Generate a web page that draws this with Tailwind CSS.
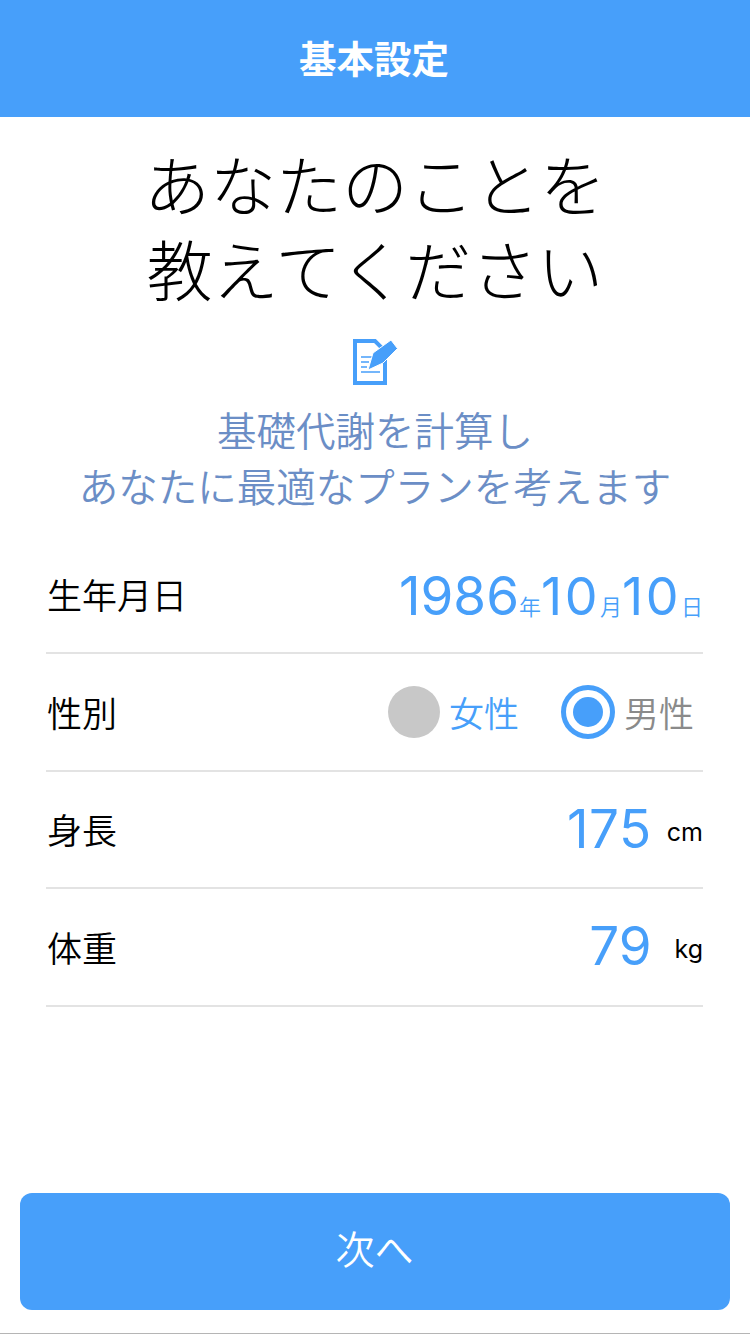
<!DOCTYPE html>
<html lang="ja">
<head>
<meta charset="utf-8">
<script src="https://cdn.jsdelivr.net/npm/@tailwindcss/browser@4"></script>
</head>
<body class="bg-white">
<div class="w-[750px] h-[1334px] flex flex-col overflow-hidden font-['Noto_Sans_CJK_JP','Noto_Sans',sans-serif]">
  <header class="h-[117px] shrink-0 bg-[#479ffa] flex items-center justify-center pb-[3px] pr-[2px]">
    <h1 class="text-[37.5px] leading-[40px] font-bold text-white">基本設定</h1>
  </header>
  <div class="mt-[23px] text-center text-[66px] leading-[85px] font-light text-black">
    <p>あなたのことを</p>
    <p>教えてください</p>
  </div>
  <div class="mt-[29px] flex justify-center">
    <svg class="ml-[1px]" width="45" height="46" viewBox="0 0 45 46" fill="none">
      <path d="M2 2H22L32 12V44H2Z" stroke="#479ffa" stroke-width="4"/>
      <path d="M8 18H22M8 23H16M8 28H14M8 33H27" stroke="#479ffa" stroke-width="1.5"/>
      <path d="M38 1L44.5 9.5L30 24L15 31L20 14Z" fill="#479ffa" stroke="white" stroke-width="1" stroke-linejoin="round"/>
    </svg>
  </div>
  <div class="mt-[16px] text-center text-[39.5px] leading-[56px] font-[350] text-[#6b8ec6]">
    <p>基礎代謝を計算し</p>
    <p>あなたに最適なプランを考えます</p>
  </div>
  <div class="mt-[23px] ml-[46px] mr-[47px] flex flex-col">
    <div class="h-[118px] border-b-2 border-[#e3e3e3] flex items-center justify-between pl-[1px]">
      <span class="text-[35px] font-[350] text-black">生年月日</span>
      <span class="flex items-baseline pt-[5px] text-[#479ffa] font-['Inter','Noto_Sans_CJK_JP',sans-serif]">
        <span class="text-[53px] font-normal">1986</span><span class="text-[22px] font-[350]">年</span><span class="text-[52px] font-normal tracking-[2.5px]">10</span><span class="text-[22px] font-[350]">月</span><span class="text-[52px] font-normal tracking-[2.5px]">10</span><span class="text-[22px] font-[350]">日</span>
      </span>
    </div>
    <div class="h-[118px] border-b-2 border-[#e3e3e3] flex items-center justify-between pl-[1px]">
      <span class="text-[35px] font-[350] text-black">性別</span>
      <div class="flex items-center mr-[9px]">
        <span class="w-[52px] h-[52px] rounded-full bg-[#c8c8c8]"></span>
        <span class="ml-[9px] text-[35px] font-[350] text-[#479ffa]">女性</span>
        <span class="ml-[42px] w-[54px] h-[54px] rounded-full border-[5px] border-[#479ffa] flex items-center justify-center">
          <span class="w-[30px] h-[30px] rounded-full bg-[#479ffa]"></span>
        </span>
        <span class="ml-[9px] text-[35px] font-[350] text-[#8a8a8a]">男性</span>
      </div>
    </div>
    <div class="h-[117px] border-b-2 border-[#e3e3e3] flex items-center justify-between pl-[1px]">
      <span class="text-[35px] font-[350] text-black">身長</span>
      <span class="flex items-center font-['Inter',sans-serif]">
        <span class="text-[53px] font-normal tracking-[0.5px] text-[#479ffa]">175</span>
        <span class="ml-[15px] mt-[6px] text-[25px] text-black">cm</span>
      </span>
    </div>
    <div class="h-[118px] border-b-2 border-[#e3e3e3] flex items-center justify-between pl-[1px]">
      <span class="text-[35px] font-[350] text-black">体重</span>
      <span class="flex items-center font-['Inter',sans-serif]">
        <span class="text-[53px] font-normal text-[#479ffa]">79</span>
        <span class="ml-[23px] mt-[6px] text-[25px] text-black">kg</span>
      </span>
    </div>
  </div>
  <div class="mt-auto mx-[20px] mb-[23px] h-[117px] rounded-[12px] bg-[#479ffa] flex items-center justify-center pb-[8px] pr-[1px]">
    <span class="text-[39px] font-[350] text-white">次へ</span>
  </div>
  <div class="h-[1px] shrink-0 bg-[#b5b5b5]"></div>
</div>
</body>
</html>
